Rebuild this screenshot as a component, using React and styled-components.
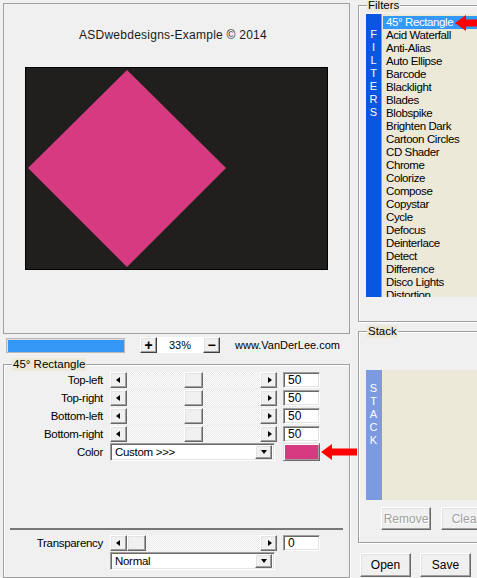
import React from 'react';
import styled, { createGlobalStyle, css } from 'styled-components';

const Global = createGlobalStyle`
  html, body { margin: 0; padding: 0; background: #f0f0f0; overflow: hidden; }
  body { font-family: "Liberation Sans", Arial, sans-serif; font-size: 11px; color: #000; }
  * { box-sizing: border-box; }
`;

const sunken = css`
  border: 1px solid;
  border-color: #a0a0a0 #ffffff #ffffff #a0a0a0;
  box-shadow: inset 1px 1px #696969, inset -1px -1px #e3e3e3;
`;

const raised = css`
  border: 1px solid;
  border-color: #ffffff #696969 #696969 #ffffff;
  box-shadow: inset -1px -1px #a0a0a0, inset 1px 1px #e3e3e3;
  background: #f0f0f0;
`;

const Window = styled.div`
  width: 477px;
  height: 578px;
  overflow: hidden;
  display: flex;
  background: #f0f0f0;
`;

const LeftColumn = styled.div`
  width: 350px;
  flex: none;
  padding: 3px 0 0 3px;
  display: flex;
  flex-direction: column;
`;

const PreviewPanel = styled.div`
  width: 347px;
  height: 331px;
  border: 1px solid #a0a0a0;
  display: flex;
  flex-direction: column;
  align-items: center;
`;

const Title = styled.div`
  margin-top: 24px;
  padding-right: 7px;
  font-size: 12px;
  line-height: 14px;
  letter-spacing: 0.25px;
  color: #1a1a1a;
`;

const Canvas = styled.div`
  margin-top: 25px;
  width: 303px;
  height: 203px;
  border: 1px solid #000;
  background: #201f1e;
  display: flex;
`;

const ZoomRow = styled.div`
  margin-top: 3px;
  height: 16px;
  display: flex;
  align-items: center;
`;

const Progress = styled.div`
  margin-left: 3px;
  width: 119px;
  height: 15px;
  border: 1px solid #b9b9b9;
  background: #3597f5;
  box-shadow: inset 1px 1px #dcdcdc;
`;

const SmallButton = styled.div`
  ${raised};
  margin-left: ${p => p.$gap || 0}px;
  width: 17px;
  height: 16px;
  display: flex;
  align-items: center;
  justify-content: center;
  font-size: 14px;
  font-weight: bold;
  line-height: 1;
  border-color: #ffffff #404040 #404040 #ffffff;
`;

const PctBox = styled.div`
  width: 46px;
  height: 16px;
  background: #fff;
  display: flex;
  align-items: center;
  justify-content: center;
  font-size: 11px;
`;

const SiteText = styled.div`
  margin-left: 15px;
  font-size: 11px;
`;

const GroupBox = styled.div`
  position: relative;
  border: 1px solid #a0a0a0;
  box-shadow: 1px 1px 0 #fff, inset 1px 1px 0 #fff;
  margin-top: ${p => p.$top || 0}px;
  margin-left: ${p => p.$left || 0}px;
  width: ${p => p.$width}px;
  height: ${p => p.$height}px;
  padding: ${p => p.$pad || '0'};
  flex: none;
`;

const GroupLabel = styled.span`
  position: absolute;
  left: 8px;
  top: -7px;
  background: #ece9d8;
  padding: 0 1px;
  line-height: 13px;
  font-size: 11.5px;
`;

const FormGrid = styled.div`
  display: grid;
  grid-template-columns: 100px 167px 37px;
  column-gap: 6px;
  row-gap: 2px;
  grid-auto-rows: 16px;
  align-items: center;
`;

const FieldLabel = styled.div`
  justify-self: end;
  padding-right: 1px;
  font-size: 11.5px;
  letter-spacing: -0.3px;
  line-height: 13px;
`;

const ScrollBar = styled.div`
  display: flex;
  width: 167px;
  height: 16px;
`;

const ArrowBtn = styled.div`
  ${raised};
  width: 17px;
  height: 16px;
  flex: none;
  display: flex;
  align-items: center;
  justify-content: center;
`;

const Tri = styled.span`
  width: 0;
  height: 0;
  border-top: 3.5px solid transparent;
  border-bottom: 3.5px solid transparent;
  ${p => p.$dir === 'left'
    ? 'border-right: 4px solid #000; margin-right: 2px;'
    : 'border-left: 4px solid #000; margin-left: 2px;'}
`;

const DownTri = styled.span`
  width: 0;
  height: 0;
  border-left: 3.5px solid transparent;
  border-right: 3.5px solid transparent;
  border-top: 4px solid #000;
`;

const Track = styled.div`
  flex: 1;
  display: flex;
  background: repeating-conic-gradient(#ffffff 0 25%, #e9e9e9 0 50%) 0 0 / 2px 2px;
`;

const Thumb = styled.div`
  ${raised};
  width: 19px;
  height: 16px;
  flex: none;
`;

const EditBox = styled.div`
  ${sunken};
  width: 37px;
  height: 16px;
  background: #fff;
  padding-left: 4px;
  font-size: 12px;
  line-height: 14px;
`;

const Combo = styled.div`
  ${sunken};
  width: 165px;
  height: 18px;
  background: #fff;
  display: flex;
  align-items: center;
  padding: 2px 2px 2px 4px;
  font-size: 11.5px;
  letter-spacing: -0.3px;
`;

const ComboText = styled.span`
  flex: 1;
`;

const ComboBtn = styled.div`
  ${raised};
  width: 17px;
  height: 14px;
  display: flex;
  align-items: center;
  justify-content: center;
`;

const SwatchWrap = styled.div`
  position: relative;
  width: 37px;
  height: 18px;
`;

const Swatch = styled.div`
  width: 37px;
  height: 18px;
  background: #d63a80;
  border: 1px solid;
  border-color: #e3e3e3 #696969 #696969 #e3e3e3;
  box-shadow: inset 1px 1px #ffffff, inset -1px -1px #a0a0a0;
`;

const ArrowOverlay = styled.svg`
  position: absolute;
  left: ${p => p.$left}px;
  top: ${p => p.$top}px;
  overflow: visible;
`;

const Spacer = styled.div`
  height: ${p => p.$h}px;
`;

const Separator = styled.div`
  margin-left: 6px;
  width: 333px;
  height: 2px;
  background: #777;
  margin-bottom: 5px;
`;

const RightColumn = styled.div`
  margin-left: 8px;
  width: 150px;
  flex: none;
  display: flex;
  flex-direction: column;
`;

const ListFrame = styled.div`
  display: flex;
  height: ${p => p.$h}px;
`;

const SideBar = styled.div`
  width: 15px;
  flex: none;
  background: ${p => p.$color};
  color: #fff;
  display: flex;
  flex-direction: column;
  align-items: center;
  padding-top: ${p => p.$pt}px;
  font-size: 11px;
  line-height: 13px;
`;

const List = styled.div`
  flex: 1;
  background: #ece9d8;
  border-left: 1px solid #9a9a9a;
  padding-top: 2px;
  overflow: hidden;
`;

const ListItem = styled.div`
  position: relative;
  height: 13px;
  line-height: 13px;
  padding-left: 3px;
  margin-left: 1px;
  font-size: 11.5px;
  letter-spacing: -0.4px;
  white-space: nowrap;
  background: ${p => (p.$selected ? '#3399ff' : 'transparent')};
  color: ${p => (p.$selected ? '#fff' : '#000')};
`;

const ButtonRow = styled.div`
  display: flex;
  gap: ${p => p.$gap}px;
  margin-top: ${p => p.$top}px;
  padding-left: ${p => p.$left}px;
`;

const PushButton = styled.div`
  ${raised};
  width: ${p => p.$w}px;
  height: ${p => p.$h}px;
  flex: none;
  display: flex;
  align-items: center;
  justify-content: center;
  font-size: 12px;
  color: ${p => (p.$disabled ? '#a0a0a0' : '#000')};
  text-shadow: ${p => (p.$disabled ? '1px 1px #fff' : 'none')};
`;

const filters = [
  '45° Rectangle', 'Acid Waterfall', 'Anti-Alias', 'Auto Ellipse', 'Barcode',
  'Blacklight', 'Blades', 'Blobspike', 'Brighten Dark', 'Cartoon Circles',
  'CD Shader', 'Chrome', 'Colorize', 'Compose', 'Copystar', 'Cycle', 'Defocus',
  'Deinterlace', 'Detect', 'Difference', 'Disco Lights', 'Distortion',
];

const corners = [
  { label: 'Top-left', value: 50 },
  { label: 'Top-right', value: 50 },
  { label: 'Bottom-left', value: 50 },
  { label: 'Bottom-right', value: 50 },
];

function RedArrow({ left, top }) {
  return (
    <ArrowOverlay $left={left} $top={top} width="36" height="16" viewBox="0 0 36 16">
      <polygon points="0,8 11,0 11,4.5 36,4.5 36,11.5 11,11.5 11,16" fill="#ff0000" />
    </ArrowOverlay>
  );
}

function Slider({ value }) {
  return (
    <ScrollBar>
      <ArrowBtn><Tri $dir="left" /></ArrowBtn>
      <Track>
        <Thumb style={{ marginLeft: `calc((100% - 19px) * ${value / 100})` }} />
      </Track>
      <ArrowBtn><Tri $dir="right" /></ArrowBtn>
    </ScrollBar>
  );
}

function ComboBox({ text }) {
  return (
    <Combo>
      <ComboText>{text}</ComboText>
      <ComboBtn><DownTri /></ComboBtn>
    </Combo>
  );
}

export default function App() {
  return (
    <>
      <Global />
      <Window>
        <LeftColumn>
          <PreviewPanel>
            <Title>ASDwebdesigns-Example © 2014</Title>
            <Canvas>
              <svg width="301" height="201" viewBox="0 0 301 201">
                <polygon points="101,2 200,100 101,199 2,100" fill="#d63a80" />
              </svg>
            </Canvas>
          </PreviewPanel>

          <ZoomRow>
            <Progress />
            <SmallButton $gap={15}>+</SmallButton>
            <PctBox>33%</PctBox>
            <SmallButton>−</SmallButton>
            <SiteText>www.VanDerLee.com</SiteText>
          </ZoomRow>

          <GroupBox $top={11} $width={347} $height={214} $pad="7px 0 0 0">
            <GroupLabel>45° Rectangle</GroupLabel>
            <FormGrid>
              {corners.map(c => (
                <React.Fragment key={c.label}>
                  <FieldLabel>{c.label}</FieldLabel>
                  <Slider value={c.value} />
                  <EditBox>{c.value}</EditBox>
                </React.Fragment>
              ))}
              <FieldLabel>Color</FieldLabel>
              <ComboBox text="Custom >>>" />
              <SwatchWrap>
                <Swatch />
                <RedArrow left={38} top={1} />
              </SwatchWrap>
            </FormGrid>
            <Spacer $h={68} />
            <Separator />
            <FormGrid>
              <FieldLabel>Transparency</FieldLabel>
              <Slider value={0} />
              <EditBox>0</EditBox>
              <span />
              <ComboBox text="Normal" />
            </FormGrid>
          </GroupBox>
        </LeftColumn>

        <RightColumn>
          <GroupBox $top={5} $width={150} $height={317} $pad="8px 0 0 7px">
            <GroupLabel>Filters</GroupLabel>
            <ListFrame $h={283}>
              <SideBar $color="#0a55e1" $pt={14}>
                {'FILTERS'.split('').map((ch, i) => <span key={i}>{ch}</span>)}
              </SideBar>
              <List>
                {filters.map((f, i) => (
                  <ListItem key={f} $selected={i === 0}>
                    {f}
                    {i === 0 && <RedArrow left={72} top={-1} />}
                  </ListItem>
                ))}
              </List>
            </ListFrame>
          </GroupBox>

          <GroupBox $top={9} $width={150} $height={212} $pad="38px 0 0 7px">
            <GroupLabel>Stack</GroupLabel>
            <ListFrame $h={130}>
              <SideBar $color="#7b9ae0" $pt={12}>
                {'STACK'.split('').map((ch, i) => <span key={i}>{ch}</span>)}
              </SideBar>
              <List />
            </ListFrame>
            <ButtonRow $gap={10} $top={7} $left={15}>
              <PushButton $w={50} $h={23} $disabled>Remove</PushButton>
              <PushButton $w={50} $h={23} $disabled>Clear</PushButton>
            </ButtonRow>
          </GroupBox>

          <ButtonRow $gap={9} $top={10} $left={2}>
            <PushButton $w={51} $h={24}>Open</PushButton>
            <PushButton $w={51} $h={24}>Save</PushButton>
          </ButtonRow>
        </RightColumn>
      </Window>
    </>
  );
}
